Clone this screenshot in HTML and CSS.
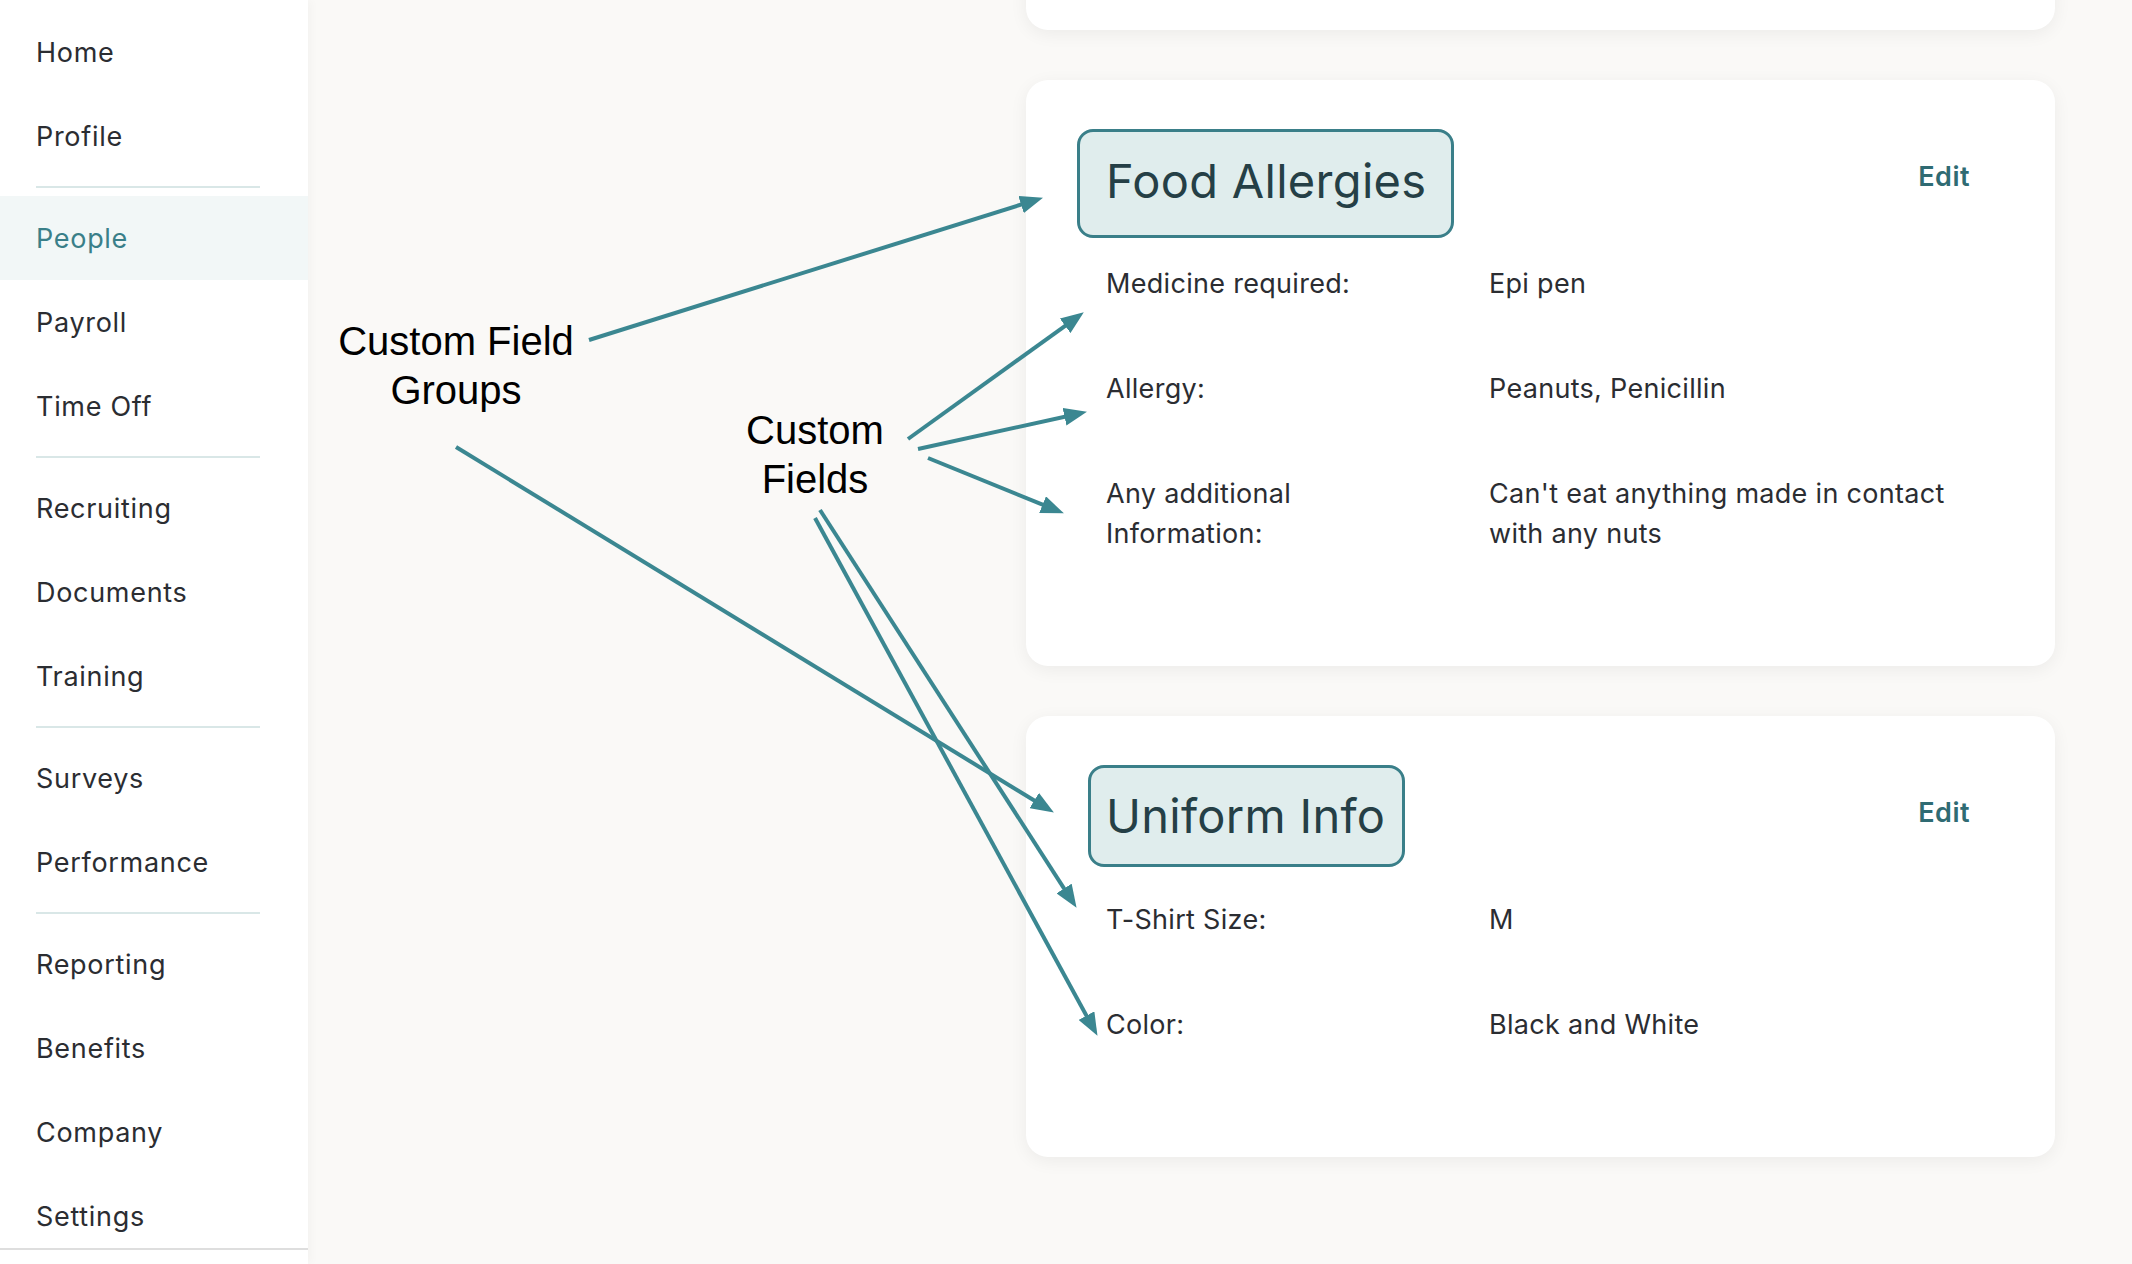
FILE: index.html
```html
<!DOCTYPE html>
<html lang="en">
<head>
<meta charset="utf-8">
<title>People – Custom Fields</title>
<link rel="stylesheet" href="styles.css">
</head>
<body>
<div class="app">
  <aside class="sidebar">
    <nav class="nav">
      <a class="nav-item">Home</a>
      <a class="nav-item">Profile</a>
      <div class="nav-sep"></div>
      <a class="nav-item is-active">People</a>
      <a class="nav-item">Payroll</a>
      <a class="nav-item">Time Off</a>
      <div class="nav-sep"></div>
      <a class="nav-item">Recruiting</a>
      <a class="nav-item">Documents</a>
      <a class="nav-item">Training</a>
      <div class="nav-sep"></div>
      <a class="nav-item">Surveys</a>
      <a class="nav-item">Performance</a>
      <div class="nav-sep"></div>
      <a class="nav-item">Reporting</a>
      <a class="nav-item">Benefits</a>
      <a class="nav-item">Company</a>
      <a class="nav-item">Settings</a>
    </nav>
  </aside>

  <main class="main">
    <section class="card card--prev"></section>

    <section class="card">
      <header class="card-head">
        <h2 class="group-title group-title--food">Food Allergies</h2>
        <a class="edit">Edit</a>
      </header>
      <dl class="fields">
        <div class="field">
          <dt class="field-label">Medicine required:</dt>
          <dd class="field-value">Epi pen</dd>
        </div>
        <div class="field">
          <dt class="field-label">Allergy:</dt>
          <dd class="field-value">Peanuts, Penicillin</dd>
        </div>
        <div class="field">
          <dt class="field-label">Any additional Information:</dt>
          <dd class="field-value">Can't eat anything made in contact with any nuts</dd>
        </div>
      </dl>
    </section>

    <section class="card">
      <header class="card-head">
        <h2 class="group-title group-title--uniform">Uniform Info</h2>
        <a class="edit">Edit</a>
      </header>
      <dl class="fields">
        <div class="field">
          <dt class="field-label">T-Shirt Size:</dt>
          <dd class="field-value">M</dd>
        </div>
        <div class="field">
          <dt class="field-label">Color:</dt>
          <dd class="field-value">Black and White</dd>
        </div>
      </dl>
    </section>
  </main>
</div>

<!-- callout layer: labels and arrows drawn over the page -->
<div class="callouts">
  <div class="callout-label callout-label--groups">Custom Field<br>Groups</div>
  <div class="callout-label callout-label--fields">Custom<br>Fields</div>
  <svg class="callout-arrows" width="2132" height="1264" viewBox="0 0 2132 1264">
    <defs>
      <marker id="head" markerUnits="userSpaceOnUse" markerWidth="24" markerHeight="18"
              refX="12" refY="9" orient="auto">
        <path d="M0,0 L23,9 L0,18 Z" fill="#3b8791"/>
      </marker>
    </defs>
    <g stroke="#3b8791" stroke-width="4" fill="none" marker-end="url(#head)">
      <line x1="589" y1="340" x2="1032.5" y2="201"/>
      <line x1="456" y1="447" x2="1044.5" y2="806.8"/>
      <line x1="908" y1="439" x2="1074.9" y2="318.8"/>
      <line x1="918" y1="449" x2="1076.2" y2="414.2"/>
      <line x1="928" y1="458" x2="1053.7" y2="509.2"/>
      <line x1="820" y1="510" x2="1070.6" y2="898.6"/>
      <line x1="815" y1="518" x2="1092.2" y2="1026.2"/>
    </g>
  </svg>
</div>
</body>
</html>
```

FILE: styles.css
```css
* {
  box-sizing: border-box;
}

html, body {
  margin: 0;
  padding: 0;
}

body {
  width: 2132px;
  height: 1264px;
  overflow: hidden;
  background: #faf9f7;
  font-family: Inter, "Noto Sans", "Liberation Sans", sans-serif;
  color: #2b2d32;
  position: relative;
}

.app {
  display: flex;
  height: 1264px;
}

/* ---------- sidebar ---------- */
.sidebar {
  width: 308px;
  flex: 0 0 308px;
  background: #ffffff;
  box-shadow: 2px 0 10px rgba(0, 0, 0, 0.035);
  position: relative;
  z-index: 1;
}

.nav {
  display: flex;
  flex-direction: column;
  height: 1250px;
  padding-top: 10px;
  overflow: hidden;
  border-bottom: 2px solid #dedede;
}

.nav-item {
  display: flex;
  align-items: center;
  flex: 0 0 84px;
  height: 84px;
  padding-left: 36px;
  font-size: 27px;
  letter-spacing: 0.7px;
  color: #2b2d32;
  text-decoration: none;
}

.nav-item.is-active {
  background: #f2f7f7;
  color: #3a7f89;
}

.nav-sep {
  flex: 0 0 18px;
  display: flex;
  align-items: center;
  padding: 0 48px 0 36px;
}

.nav-sep::before {
  content: "";
  display: block;
  width: 100%;
  height: 2px;
  background: #d9e7e7;
}

/* ---------- main column ---------- */
.main {
  flex: 1;
  display: flex;
  flex-direction: column;
  align-items: flex-end;
  gap: 50px;
  padding-right: 77px;
}

.card {
  width: 1029px;
  background: #ffffff;
  border-radius: 22px;
  box-shadow: 0 4px 18px rgba(0, 0, 0, 0.06);
  padding: 57px 85px 112px 80px;
}

.card--prev {
  height: 180px;
  margin-top: -150px;
  padding: 0;
}

.card-head {
  display: flex;
  align-items: center;
  justify-content: space-between;
  height: 80px;
}

.group-title {
  margin: 0;
  font-size: 47px;
  font-weight: 400;
  line-height: 1;
  color: #253f46;
  background: #e0eded;
  border: 3px solid #3a7f89;
  border-radius: 16px;
  letter-spacing: 0.3px;
}

.group-title--food {
  padding: 25px 25px 31px 26px;
  margin-left: -29px;
  margin-top: 12px;
}

.group-title--uniform {
  padding: 24px 17px 25px 15px;
  margin-left: -18px;
  margin-top: 6px;
}

.edit {
  font-size: 27px;
  font-weight: 600;
  letter-spacing: 0.5px;
  color: #2f6b73;
  text-decoration: none;
  margin-top: -2px;
}

.fields {
  margin: 47px 0 0;
  display: flex;
  flex-direction: column;
  gap: 65px;
}

.field {
  display: grid;
  grid-template-columns: 300px 1fr;
  column-gap: 83px;
  font-size: 27px;
  line-height: 40px;
  letter-spacing: 0.3px;
}

.field-label,
.field-value {
  margin: 0;
  color: #2b2d32;
}

/* ---------- callouts over the page ---------- */
.callouts {
  position: absolute;
  inset: 0;
  pointer-events: none;
  z-index: 5;
}

.callout-arrows {
  position: absolute;
  left: 0;
  top: 0;
}

.callout-label {
  position: absolute;
  width: 300px;
  text-align: center;
  font-family: "Liberation Sans", Arial, sans-serif;
  font-size: 40px;
  line-height: 49px;
  color: #000000;
}

.callout-label--groups {
  left: 306px;
  top: 317px;
}

.callout-label--fields {
  left: 665px;
  top: 406px;
}
```
